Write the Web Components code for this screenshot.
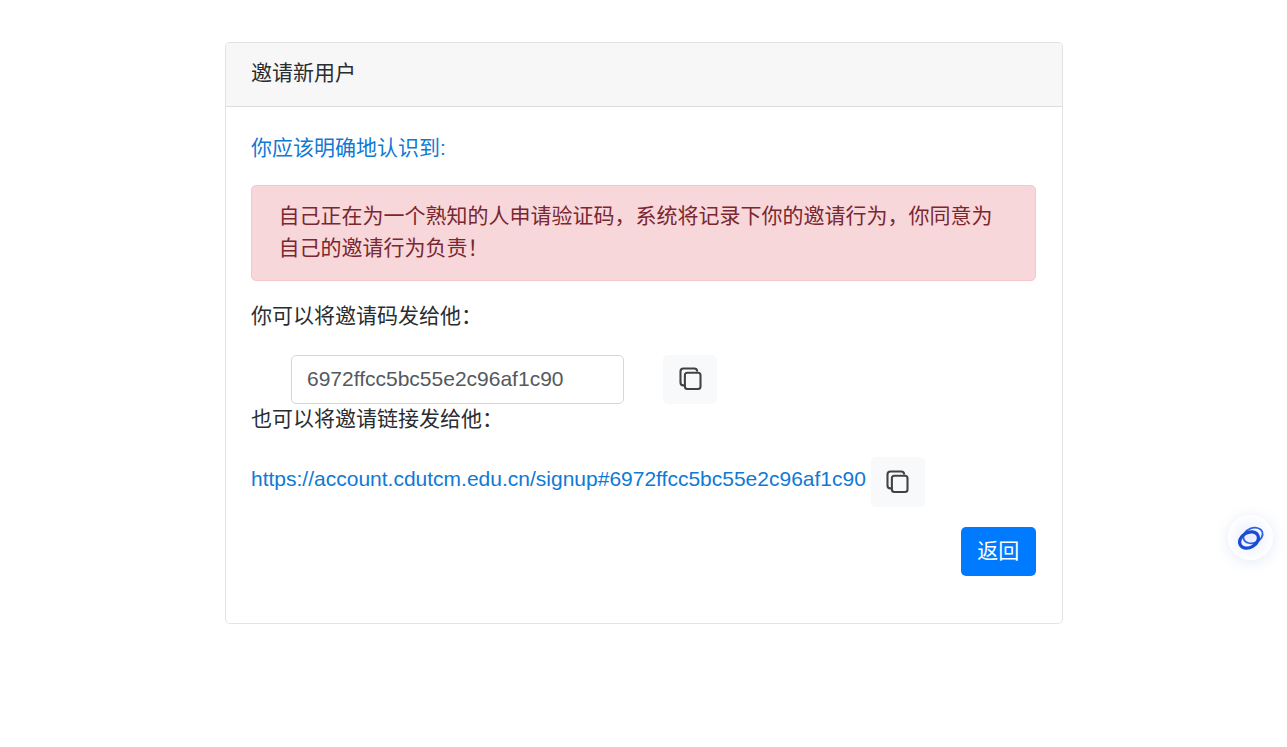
<!DOCTYPE html>
<html lang="zh-CN">
<head>
<meta charset="utf-8">
<title>邀请新用户</title>
<style>
html,body{margin:0;padding:0;background:#fff;}
body{font:21px/31.2px "Liberation Sans","Noto Sans CJK SC",sans-serif;color:#2a2d30;}
</style>
</head>
<body>
<template id="copy-t">
<style>
:host{display:inline-flex;flex:none;}
button{width:54px;height:49.4px;padding:0 0 1px;margin:0;border:0;border-radius:5px;background:#f8f9fa;display:flex;align-items:center;justify-content:center;}
svg{width:25px;height:25px;display:block;}
</style>
<button type="button" aria-label="复制">
<svg viewBox="0 0 24 24" fill="none" stroke="#404346" stroke-width="2" stroke-linejoin="round" stroke-linecap="round">
<rect x="6.6" y="6.4" width="15" height="15.6" rx="2.4"/>
<path d="M6.4 18.6H5.2A2.8 2.8 0 0 1 2.4 15.8V5.2A2.8 2.8 0 0 1 5.2 2.4H15.8A2.8 2.8 0 0 1 18.4 4.6"/>
</svg>
</button>
</template>

<template id="card-t">
<style>
:host{display:block;width:838px;box-sizing:border-box;border:1.3px solid rgba(0,0,0,.11);border-radius:5px;background:#fff;overflow:hidden;}
header{padding:13.8px 25px 18.4px;background:rgba(0,0,0,.03);border-bottom:1.3px solid rgba(0,0,0,.11);}
main{padding:24.5px 26.2px 47px 25px;}
</style>
<header><slot name="title"></slot></header>
<main><slot></slot></main>
</template>

<template id="alert-t">
<style>
:host{display:block;padding:14.1px 26px 17.1px 26.4px;margin-bottom:19.3px;background:#f8d7da;border:1.3px solid #f5c6cb;border-radius:5px;color:#7a2731;}
</style>
<slot></slot>
</template>

<template id="page-t">
<style>
:host{display:flex;justify-content:center;padding:42px 0 0 1px;}
p{margin:0 0 22.3px;}
.lead{color:#1079d4;}
.tell{margin-bottom:23.3px;}
.code-row{display:flex;align-items:center;gap:39px;margin-left:40px;margin-bottom:-1px;}
.code{width:333px;height:49.4px;box-sizing:border-box;padding:0 15px;margin:0;border:1.3px solid #d3d7db;border-radius:5px;font:inherit;color:#54595e;background:#fff;outline:0;}
.link-row{display:flex;align-items:center;gap:5px;margin-top:22.8px;}
a{color:#1079d4;text-decoration:none;white-space:nowrap;margin-bottom:6px;}
.actions{display:flex;justify-content:flex-end;margin-top:20.4px;}
.back{width:75px;height:49.4px;padding:0 0 3px;border:0;border-radius:5px;background:#007bff;color:#fff;font:inherit;}
</style>
<invite-card>
<span slot="title">邀请新用户</span>
<p class="lead">你应该明确地认识到:</p>
<invite-alert>自己正在为一个熟知的人申请验证码，系统将记录下你的邀请行为，你同意为自己的邀请行为负责！</invite-alert>
<p class="tell">你可以将邀请码发给他：</p>
<div class="code-row">
<input class="code" type="text" value="6972ffcc5bc55e2c96af1c90" readonly>
<copy-button></copy-button>
</div>
<div>也可以将邀请链接发给他：</div>
<div class="link-row">
<a href="#">https://account.cdutcm.edu.cn/signup#6972ffcc5bc55e2c96af1c90</a>
<copy-button></copy-button>
</div>
<div class="actions"><button class="back" type="button">返回</button></div>
</invite-card>
</template>

<template id="float-t">
<style>
:host{position:fixed;left:1228px;top:515px;width:45px;height:45px;border-radius:50%;background:radial-gradient(circle,#e6edff 0,#fff 72%);box-shadow:0 2px 14px rgba(60,90,200,.13);display:flex;align-items:center;justify-content:center;}
svg{width:36px;height:36px;display:block;flex:none;}
</style>
<svg viewBox="0 0 36 36" fill="none">
<ellipse cx="20" cy="15.5" rx="10" ry="7.4" transform="rotate(-22 20 15.5)" stroke="#2f62e0" stroke-width="1.8"/>
<ellipse cx="16" cy="20" rx="10" ry="7.4" transform="rotate(-30 16 20)" stroke="#1a4bd4" stroke-width="3.2"/>
</svg>
</template>

<invite-page></invite-page>
<float-widget></float-widget>

<script>
function reg(name,tid){
  customElements.define(name,class extends HTMLElement{
    constructor(){
      super();
      this.attachShadow({mode:'open'}).appendChild(document.getElementById(tid).content.cloneNode(true));
    }
  });
}
reg('copy-button','copy-t');
reg('invite-card','card-t');
reg('invite-alert','alert-t');
reg('invite-page','page-t');
reg('float-widget','float-t');
</script>
</body>
</html>
